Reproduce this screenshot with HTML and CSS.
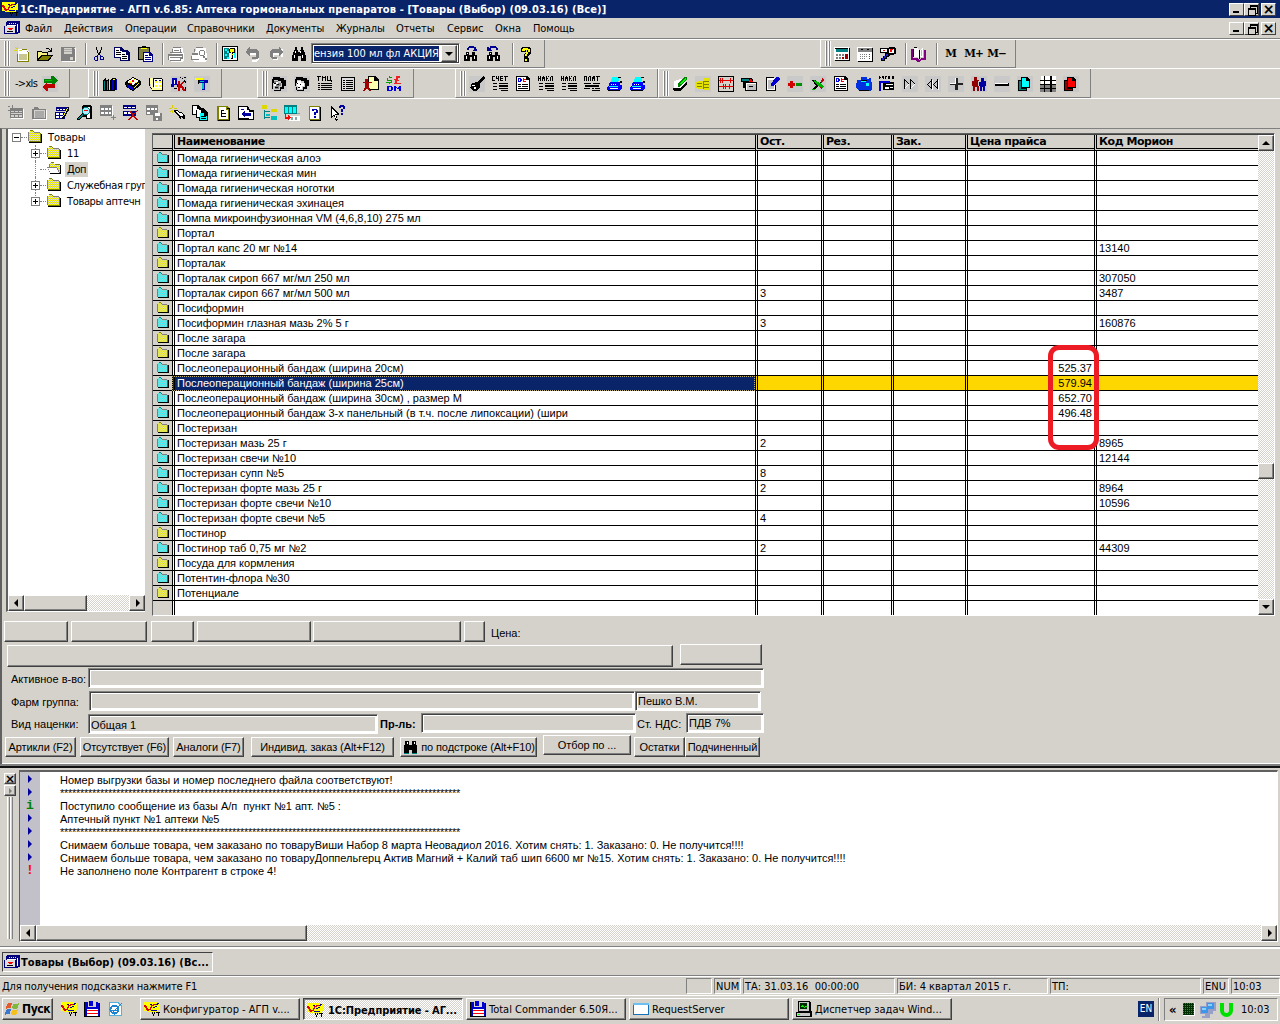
FILE: index.html
```html
<!DOCTYPE html>
<html lang="ru">
<head>
<meta charset="utf-8">
<title>1С:Предприятие</title>
<link rel="stylesheet" href="styles.css">
</head>
<body>
<svg class="defs" width="0" height="0">
<defs>
<pattern id="dy" width="2" height="2" patternUnits="userSpaceOnUse"><path fill="#ffff00" d="M0 0h2v2H0z"/><path fill="#c8c8b0" d="M0 0h1v1H0zM1 1h1v1H1z"/></pattern>
<pattern id="dc" width="2" height="2" patternUnits="userSpaceOnUse"><path fill="#00ffff" d="M0 0h2v2H0z"/><path fill="#c0c8c8" d="M0 0h1v1H0zM1 1h1v1H1z"/></pattern>
</defs>
<symbol id="fy" viewBox="0 0 16 16"><path fill="#fff" d="M1 4h12v8H1z"/><path fill="url(#dy)" d="M2 3l1-1h3l1 2h6v8H2z"/><path fill="#808000" d="M13 4h1v9H2v-1h11zM3 1h3v1H3zM6 2h1v1H6z"/><path fill="#000" d="M14 5h1v9H2v-1h12z"/><path fill="#808080" d="M1 3h1v9H1zM7 3h6v1H7z"/></symbol>
<symbol id="fc" viewBox="0 0 16 16"><path fill="#fff" d="M1 4h12v8H1z"/><path fill="url(#dc)" d="M2 3l1-1h3l1 2h6v8H2z"/><path fill="#008080" d="M13 4h1v9H2v-1h11zM3 1h3v1H3zM6 2h1v1H6z"/><path fill="#000" d="M14 5h1v9H2v-1h12z"/><path fill="#808080" d="M1 3h1v9H1zM7 3h6v1H7z"/></symbol>
<symbol id="fo" viewBox="0 0 16 16"><path fill="url(#dy)" d="M4 2h4l1 2h5v8H4z"/><path fill="#fff" d="M1 7h10l3 5H4z"/><path fill="#808080" d="M1 6h10v1H1zM2 8h1v1H2zM3 10h1v1H3zM11 7h1v2h1v2h1v1h-1v-1h-1V9h-1zM3 3h1v3H3z"/><path fill="#808000" d="M5 1h3v1H5zM9 3h5v1H9z"/><path fill="#000" d="M14 4h1v9H4v-1h10z"/></symbol>
<symbol id="onec" viewBox="0 0 16 16"><path fill="#ff0" d="M0 1h13v1h3v7h-2v2H3v-1H0z"/><path fill="#e00000" d="M0 4h2v1h1v2h1v1h2V6h1V4h2V3h4v1h-3v1H8v2H7v2H5v1H3V9H2V7H1V6H0z"/><path fill="#0000a0" d="M6 3h2v1H6zM7 9h6v1H7zM13 2h2v1h-2zM12 3h2v1h-2zM11 5h2v1h-2zM9 6h2v1H9z"/><path d="M8 11h1v2h1v-2h1v2h-1v2H9v-2H8zM12 11h4v1h-1v3h-1v-3h-2z"/></symbol>
<symbol id="cal" viewBox="0 0 16 16"><path fill="#000080" d="M3 1h13v12h-2v1H0V6h2V2h1z"/><path fill="#dedede" d="M1 6h10v7H1z"/><path fill="#ff0" d="M5 3h1v1H5zM7 3h1v1H7zM9 3h1v1H9zM11 3h1v1h-1z"/><path fill="#fff" d="M3 5h9v1H3zM13 4h1v8h-1z"/><path fill="red" d="M4 8h5v1H4zM5 9h3v1H5z"/><path d="M3 11h6v1H3z"/></symbol>
<symbol id="new" viewBox="0 0 16 16"><path fill="#fff" d="M4 3h9l2 3v9H4z"/><path fill="#c9c690" d="M5 8h8v6H5z"/><path fill="#808000" d="M3 6h1v9H3zM8 3h5v1H8zM13 5h1v1h1v10H3v-1h11V6h-1z"/><path fill="#dfd800" d="M3 1h1v3H3zM0 4h3v1H0zM5 4h3v1H5zM1 1l2 2v1zM7 1L5 3v1zM3 5h1v3H3zM1 8l2-3z"/></symbol>
<symbol id="open" viewBox="0 0 16 16"><path d="M0 5h4l1 1h6v3h5l-4 6H0zM9 2h3v1H9zM12 3h1v1h-1zM14 2h1v4h-4V5h2V4h1z"/><path fill="#f4f080" d="M1 6h3l1 1h5v2H4l-3 4z"/><path fill="#808000" d="M5 10h9l-3 4H2z"/></symbol>
<symbol id="save" viewBox="0 0 16 16"><path fill="#fff" d="M2 2h15v14H2z"/><path fill="#808080" d="M1 1h14v14H1z"/><path fill="#d5d2cc" d="M4 2h8v6H4zM10 11h3v3h-3zM14 2h1v1h-1z"/><path fill="#aaa" d="M4 3h8v1H4zM4 5h8v1H4z"/></symbol>
<symbol id="cut" viewBox="0 0 16 16"><path d="M5 1h1v3h1v3h1v2H7V7H6V4H5zM10 1h1v3h-1v3H9v2H8V6h1V4h1z"/><path fill="#000090" d="M6 9h1v1H6zM4 10h3v1H4zM3 11h1v3H3zM4 14h3v1H4zM6 11h1v3H6zM9 9h1v1h2v1h-2v3H9zM12 11h1v3h-3v-1h2z"/></symbol>
<symbol id="copy" viewBox="0 0 16 16"><path fill="#000060" d="M0 1h7l3 3h3l3 3v8H6v-3H0z"/><path fill="#fff" d="M1 2h5v3h2v6H1zM7 6h5v3h2v5H7z"/><path d="M2 4h3v1H2zM2 6h5v1H2zM2 8h5v1H2zM8 8h3v1H8zM8 10h5v1H8zM8 12h5v1H8z"/></symbol>
<symbol id="paste" viewBox="0 0 16 16"><path d="M1 1h4V0h4v1h4v13H1z"/><path fill="#808040" d="M2 2h10v11H2z"/><path fill="#ff0" d="M4 2h6v1H4z"/><path fill="#000080" d="M6 6h7l3 3v7H6z"/><path fill="#fff" d="M7 7h5v3h3v5H7z"/><path fill="#000080" d="M8 9h3v1H8zM8 11h6v1H8zM8 13h6v1H8z"/></symbol>
<symbol id="print" viewBox="0 0 16 16"><path fill="#fff" d="M5 2h10v5h2v7l-3 2H3l-2-2V8h3z"/><path fill="#808080" d="M5 1h8v1H5zM4 3h1v3H4zM12 3h1v4h-1zM2 6h12v1H2zM0 8h15v2H0zM0 10h1v4H0zM14 10h1v3h-2v2H2v-1h10v-2H2v-1h12zM6 4h5v1H6z"/></symbol>
<symbol id="preview" viewBox="0 0 16 16"><path fill="#fff" d="M5 2h10v5h2v7l-3 2H3l-2-2V8h3z"/><path fill="#808080" d="M5 1h7v1H5zM3 3h1v3H3zM1 7h6v2H1zM0 10h1v3h7v1H0zM9 4h4v1H9zM8 5h1v4H8zM13 5h1v4h-1zM9 9h4v1H9zM12 10h2v2h2v2h-2v-2h-2z"/></symbol>
<symbol id="keyhelp" viewBox="0 0 16 16"><path d="M0 0h16v15H0z"/><path fill="#fff" d="M1 1h14v13H1z"/><path fill="#008080" d="M2 2h5v11H2z"/><path fill="#0ff" d="M3 3h2v2H3zM5 5h2v2H5zM3 8h2v2H3zM5 11h2v2H5zM12 3h2v9h-2z"/><path d="M8 2h5v5h-2v6H9V7H7V3h1z"/><path fill="#ff0" d="M8 3h4v3H8zM9 6h1v6H9zM10 8h2v1h-2z"/></symbol>
<symbol id="undo" viewBox="0 0 16 16"><path fill="#fff" d="M3 3h1v3h7l3 2v6l-3 2H7v-2h4V9H4v1L1 7z"/><path fill="#808080" d="M4 1h1v2h6l3 2v6l-2 2H7v-2h4V7H5v3H4L1 6z"/></symbol>
<symbol id="redo" viewBox="0 0 16 16"><path fill="#fff" d="M13 3h2v8h-2V9H6v3h4v2H5l-2-2V8l3-2h7z"/><path fill="#808080" d="M11 1h1l3 5-3 4h-1V7H5v4h4v2H4l-2-2V5l3-2h6z"/></symbol>
<symbol id="bino" viewBox="0 0 16 16"><path d="M4 1h2v3h1v2h2V4h1V1h2v3h1v2h1v3h1v6h-5v-5H7v5H1V9h1V6h1V4h1z"/><path fill="#fff" d="M4 5h1v2H4zM3 9h1v3H3zM9 5h1v2H9zM11 9h1v3h-1z"/></symbol>
<symbol id="bdark" viewBox="0 0 16 16"><path d="M3 2h4v4h3V2h4v4h1v9h-5v-4H7v4H2V6h1z"/><path fill="#fff" d="M5 3h1v2H5zM12 3h1v2h-1z"/><path fill="#008080" d="M2 14h5v1H2zM10 14h5v1h-5z"/></symbol>
<symbol id="bnext" viewBox="0 0 16 16"><path d="M3 6h3v3h3V6h3v3h2v6H9v-4H7v4H1V9h2z"/><path fill="#fff" d="M3 10h1v3H3zM11 10h1v3h-1zM4 7h1v1H4z"/><path fill="#000090" d="M4 2h1V1h1V0h5v1h2v2h1v2h-4V4h1V2H6v2H4z"/></symbol>
<symbol id="bprev" viewBox="0 0 16 16"><path d="M3 6h3v3h3V6h3v3h2v6H9v-4H7v4H1V9h2z"/><path fill="#fff" d="M3 10h1v3H3zM11 10h1v3h-1zM4 7h1v1H4z"/><path fill="#000090" d="M12 4h-2V2H5v2h1v1H1V1h2v1h1V0h6v1h1v1h1z"/></symbol>
<symbol id="q" viewBox="0 0 16 16"><path d="M4 1h7l2 2v4l-3 3v2H6V8l3-3V4H8v2H3V2zM6 12h5v4H6z"/><path fill="#ff0" d="M5 2h5v1h2v3h-2v2H9v2H7V8h1V6h2V4H7v1H4V3h1zM7 13h2v2H7z"/></symbol>
<symbol id="calc" viewBox="0 0 16 16"><path fill="#fff" d="M0 1h15v13H0z"/><path d="M15 2h1v13H1v-1h14zM1 2h13v1H1z"/><path fill="#008080" d="M2 3h12v3H2z"/><path fill="#808080" d="M2 8h2v2H2zM5 8h2v2H5zM8 8h2v2H8zM2 11h2v2H2zM5 11h2v2H5z"/><path fill="#a00000" d="M8 11h2v2H8zM11 8h3v5h-3z"/></symbol>
<symbol id="calend" viewBox="0 0 16 16"><path fill="#fff" d="M0 1h15v14H0z"/><path d="M15 2h1v14H1v-1h14z"/><path fill="#808080" d="M1 2h14v4H1zM3 8h1v1H3zM5 8h1v1H5zM7 8h1v1H7zM9 8h1v1H9zM3 10h1v1H3zM5 10h1v1H5zM7 10h1v1H7zM9 10h1v1H9zM3 12h1v1H3zM5 12h1v1H5zM7 12h1v1H7z"/><path fill="red" d="M12 8h1v1h-1zM12 10h1v1h-1zM12 12h1v1h-1z"/><path d="M4 3h2v1H4zM10 3h2v1h-2z"/></symbol>
<symbol id="find" viewBox="0 0 16 16"><path d="M0 2h9V1h6l1 2v5h-2v1h-4v1H9v1H7v2H5v2H1v-3h2v-2h2V7H0z"/><path fill="#fff" d="M1 3h6v3H1zM9 3h5v4H9z"/><path fill="red" d="M10 3h3v1h-1v2h-2zM3 4h2v1H3z"/><path fill="#2020d0" d="M6 8h2v2H6v2H4v2H2v-2h2v-2h2z"/></symbol>
<symbol id="book" viewBox="0 0 16 16"><path fill="#800080" d="M0 3h2v9h5l1 2 2-2h3V4h2v10h-5l-1 2H6l-1-2H0z"/><path fill="#fff" d="M3 2h3l2 2v9l-2-2H3zM9 4l3-3v10H9z"/><path d="M8 4h1v9H8zM3 1h3v1H3zM2 3h1v8H2z"/><path fill="#cc0" d="M10 4h1v6h-1zM12 3h1v9h-1z"/></symbol>
<symbol id="arr" viewBox="0 0 16 16"><path fill="#c9c9c9" d="M0 0h16v16H0z"/><path fill="#008000" d="M2 3h7V0h2l5 4-4 4h-2V7H2z"/><path fill="#00c000" d="M3 4h7v1H3z"/><path fill="#c00000" d="M0 11l5-5v2h8v4H6v3H5z"/></symbol>
<symbol id="books" viewBox="0 0 16 16"><path d="M1 4l3-2v2l3-1v2l3-3h4v12l-2 1H1z"/><path fill="#008080" d="M2 5h1v9H2z"/><path fill="#ff0" d="M7 5h1v9H7zM11 3h2v1h-2z"/><path fill="#808000" d="M5 5h1v9H5z"/><path fill="#0000c0" d="M10 4h2v10h-2zM14 3h1v11h-1z"/></symbol>
<symbol id="cube" viewBox="0 0 16 16"><path d="M0 6l8-5 8 4v4l-8 6-7-4z"/><path fill="#fff" d="M2 6l6-4 6 3-6 4z"/><path fill="#ff0" d="M4 5h2v2H4zM8 3h2v1H8zM10 6h2v1h-2z"/><path fill="red" d="M7 4h2v2H7zM5 7h2v1H5z"/><path fill="#0000c0" d="M2 8l6 3v3l-6-3z"/><path fill="#ff0" d="M9 11l5-4v1l-5 4z"/></symbol>
<symbol id="ledger" viewBox="0 0 16 16"><path fill="#ffffa0" d="M1 2h4v10h9v2H4z"/><path d="M0 1h1v9l3 3v2h11V3h-1v11H4l-2-3V2zM5 2h9v1H5zM5 3h1v8H5z"/><path fill="#fff" d="M6 3h8v9H6z"/><path fill="#ff0" d="M7 5h2v2H7zM11 5h2v2h-2zM7 9h2v2H7zM11 9h2v2h-2z"/><path fill="#0000c0" d="M7 4h2v1H7zM11 4h2v1h-2z"/></symbol>
<symbol id="dk" viewBox="0 0 16 16"><path fill="#c9c9c9" d="M0 0h16v16H0z"/><path fill="#0000b0" d="M1 2h5v6h2v3H6V9H3v2H0V8h1z"/><path fill="#fff" d="M3 4h1v4H3z"/><path fill="#c00000" d="M7 5h2v3l3-3h2l-3 4 4 6h-3l-2-4-1 1v3H7z"/><path d="M9 1h1v1H9zM11 2h1v1h-1zM13 1h2v1h-2zM3 12h3v1H3zM13 4h1v1h1v2h-1zM14 11h1v4h-1z"/></symbol>
<symbol id="tt" viewBox="0 0 16 16"><path fill="#c9c9c9" d="M0 0h16v16H0z"/><path fill="#ff0" d="M1 2h8v2H6v3H4V4H1z"/><path d="M4 4h1v4H4z"/><path fill="#0000b0" d="M5 4h9v3h-3v7H8V7H5z"/><path fill="#00c0c0" d="M8 7h2v6H8zM6 5h4v1H6z"/></symbol>
<symbol id="face" viewBox="0 0 16 16"><path fill="#c9c9c9" d="M0 0h16v16H0z"/><path d="M2 1h7v1h4v2h2v6h-2v3h-3v2H3v-1h6v-3h2V7h-1V5H7V4H3v3H1V3h1zM1 7h1v6H1z"/><path fill="#808080" d="M3 5h4v2h3v3H8v3H4v-3H3z"/><path fill="#fff" d="M3 8h2v2H3zM5 6h2v2H5z"/><path d="M3 7h2v1H3zM6 8h2v1H6zM4 11h3v1H4z"/></symbol>
<symbol id="face2" viewBox="0 0 16 16"><path fill="#c9c9c9" d="M0 0h16v16H0z"/><path d="M2 1h7v1h4v2h2v6h-2v3h-3v2H3v-1h6v-3h2V7h-1V5H7V4H3v3H1V3h1zM1 7h1v3H1zM2 11h1v3H2z"/><path fill="#fff" d="M3 5h4v2h3v3H8v3H4v-3H3z"/><path d="M3 7h1v1H3zM6 8h1v1H6zM4 11h2v1H4z"/></symbol>
<symbol id="tmc" viewBox="0 0 16 16"><path d="M0 0h4v1H2v4H1V1H0zM5 0h1v1h2V0h1v5H8V2H6v3H5zM10 0h1v4h2V0h1v4h1v2h-1V5h-4zM1 7h2v1H1zM4 7h11v1H4zM1 9h2v1H1zM4 9h11v1H4zM1 11h2v1H1zM4 11h11v1H4zM1 13h2v1H1zM4 13h11v1H4z"/></symbol>
<symbol id="list" viewBox="0 0 16 16"><path d="M1 1h14v14H1z"/><path fill="#dedede" d="M2 2h12v12H2z"/><path d="M3 4h2v1H3zM6 4h7v1H6zM3 6h2v1H3zM6 6h7v1H6zM3 8h2v1H3zM6 8h7v1H6zM3 10h2v1H3zM6 10h7v1H6zM3 12h2v1H3zM6 12h7v1H6z"/></symbol>
<symbol id="mandoc" viewBox="0 0 16 16"><path d="M5 0h7l4 4v10H5z"/><path fill="#ffffb0" d="M6 1h5v4h4v8H6z"/><path fill="#a00000" d="M2 3h3v3h4v1H6v4l2 4H6l-2-3-2 3H0l2-4V7H0V6h2z"/></symbol>
<symbol id="dm" viewBox="0 0 16 16"><path fill="#00a000" d="M3 0h1v1h2v1H2v2h4v3H4v1H3V7H0V6h5V5H1V2h2z"/><path fill="#f02020" d="M10 0h4v2h-2v2h1v1h-2v2h4v1H8V7h1V4H8V3h2z"/><path fill="#0000e0" d="M1 10h5v1h1v3H6v1H1zm2 1v3h2v-3zM8 10h2l1 2 2-2h2v5h-2v-3l-1 1h-1l-1-1v3H8z"/></symbol>
<symbol id="ladle" viewBox="0 0 16 16"><path fill="#c9c9c9" d="M0 0h16v16H0z"/><path d="M15 0l1 2-5 5v4l-3 4H4l-3-3 2-5 5-1z"/><path fill="#fff" d="M3 9h3v1H3zM5 11h2v2H5z"/></symbol>
<symbol id="schet" viewBox="0 0 16 16"><path d="M0 0h3v1H1v3h2v1H0zM4 0h1v2h1V0h1v5H6V3H4zM8 0h3v1H9v1h2v1H9v1h2v1H8zM12 0h4v1h-2v4h-1V1h-1zM1 7h4v1H1zM7 7h9v1H7zM1 10h4v1H1zM7 9h9v2H7zM1 13h4v1H1zM7 12h9v1H7zM9 14h7v1H9z"/></symbol>
<symbol id="dkdoc" viewBox="0 0 16 16"><path d="M1 0h11l3 3v12H1z"/><path fill="#fff" d="M2 1h9v3h3v10H2z"/><path fill="#0000e0" d="M3 2h3v1h1v2H6v1H3zm1 1v2h1V3z"/><path fill="red" d="M8 2h1v1h2v1H9v1h2v1H8z"/><path d="M3 8h3v1H3zM7 8h6v1H7zM3 10h3v1H3zM7 10h6v1H7zM3 12h10v1H3z"/></symbol>
<symbol id="nakl" viewBox="0 0 16 16"><path d="M0 0h1v2h1V0h1v5H2V3H1v2H0zM4 1h1V0h1v1h1v4H6V3H5v2H4zM8 0h1v2h1V0h1v1h-1v3h1v1h-1V3H9v2H8zM13 0h2v5h-1V1h-1v4h-1V1h1zM1 7h4v1H1zM7 7h9v1H7zM1 10h4v1H1zM7 9h9v2H7zM1 13h4v1H1zM7 12h9v1H7zM9 14h7v1H9z"/></symbol>
<symbol id="plat" viewBox="0 0 16 16"><path d="M0 0h3v5H2V1H1v4H0zM5 0h2v5H6V1H5v4H4V1h1zM9 0h2v5h-1V3H9v2H8V1h1zM12 0h4v1h-2v4h-1V1h-1zM0 7h7v1H0zM9 7h7v1H9zM1 9h14v2H1zM0 12h6v1H0zM8 12h2v1H8zM11 12h5v1h-5zM8 14h8v1H8z"/></symbol>
<symbol id="typew" viewBox="0 0 16 16"><path fill="#00f" d="M3 6h10v3h2v3l-2 2H0v-3l2-2z"/><path fill="#0ff" d="M5 1h8l-2 5H4zM2 10h9v1H2z"/><path fill="#fff" d="M4 8h1v1H4zM6 8h1v1H6zM8 8h1v1H8zM3 12h8v1H3z"/><path d="M13 5h2v2h-2zM1 14h12v1H1zM11 1h3v1h-3z"/></symbol>
<symbol id="pad" viewBox="0 0 16 16"><path fill="#fff" d="M2 5l7-2 5 4-6 7-6-2z"/><path d="M1 12h7l7-6v2l-6 7H2z"/><path fill="#008000" d="M6 8l6-7h3v2l-6 7-3 1z"/><path fill="#0f0" d="M8 8l5-6 1 1-5 6z"/></symbol>
<symbol id="coins" viewBox="0 0 16 16"><path fill="#c9c9c9" d="M0 0h16v16H0z"/><path fill="#e5e200" d="M9 2h5l1 1v9l-1 2H9l-1-1H2l-1-1V6l1-1h6V3z"/><path fill="#808000" d="M9 5h5v1H9zM9 8h5v1H9zM9 11h5v1H9zM2 7h5v1H2zM2 10h5v1H2zM8 5h1v8H8z"/></symbol>
<symbol id="abacus" viewBox="0 0 16 16"><path d="M0 0h16v16H0z"/><path fill="#d5d2cc" d="M1 1h14v14H1z"/><path fill="#e00000" d="M1 4h14v1H1zM1 10h14v1H1zM2 2h1v5H2zM4 2h1v5H4zM12 2h1v5h-1zM5 8h1v5H5zM7 8h1v5H7zM11 8h1v5h-1z"/></symbol>
<symbol id="card" viewBox="0 0 16 16"><path d="M0 2h10l2 2v2h4v9H4v-3H2V6H0z"/><path fill="#008080" d="M1 3h7v2H1z"/><path fill="red" d="M9 3l3 3H8z"/><path fill="#fff" d="M5 7h10v7H5z"/><path fill="#c0c0c0" d="M6 8h9v6H6z"/><path d="M8 10h4v1H8z"/></symbol>
<symbol id="pen" viewBox="0 0 16 16"><path fill="#fff" d="M2 2h9v12H2z"/><path d="M2 1h8v1H3v12h8V9h1v6H2z"/><path fill="#c0c0c0" d="M4 4h6v9H4z"/><path fill="#0000d0" d="M12 1h2l2 2-7 7H7V8z"/></symbol>
<symbol id="pm" viewBox="0 0 16 16"><path fill="#c9c9c9" d="M0 0h16v16H0z"/><path fill="#d00000" d="M3 5h3v2h2v3H6v2H3v-2H1V7h2z"/><path fill="#009000" d="M9 7h6v3H9z"/></symbol>
<symbol id="xg" viewBox="0 0 16 16"><path fill="#c9c9c9" d="M0 0h16v16H0z"/><path d="M2 4h3l4 4 3-4h3L4 14H1l5-4z"/><path fill="#00b000" d="M3 5l8 7 3-1-2-3-8-4zM2 13h3v1H2z"/><path fill="#d00000" d="M12 2l3 2-4 3zM9 11l3 3v-3z"/></symbol>
<symbol id="bag" viewBox="0 0 16 16"><path fill="#0030e0" d="M1 4h4V1h6v2l4-1v3l1 2v6l-2 2H3l-3-4V8l1-2z"/><path fill="#0ff" d="M10 7h3v3h-3zM5 5h5v1H5z"/><path d="M5 4h6v1H5zM3 14h10v1H3z"/></symbol>
<symbol id="kassa" viewBox="0 0 16 16"><path d="M0 0h1v1h1v1H1v1H0zM3 0h2v3H4V2H3zM6 0h2v1H7v2H6zM9 0h2v3H9zM13 0h2v3h-2zM4 6h11v8H4z"/><path fill="#0000d0" d="M0 5h11v2H2v8H0z"/><path fill="#fff" d="M7 8h7v1H7zM6 11h4v2H6zM11 11h3v1h-3z"/></symbol>
<symbol id="ff" viewBox="0 0 16 16"><path fill="#c9c9c9" d="M0 0h16v16H0z"/><path d="M2 3h1v10H2zM3 4h1v1H3zM4 5h1v1H4zM5 6h1v1H5zM6 7h1v1H6zM8 3h1v10H8zM9 4h1v1H9zM10 5h1v1h-1zM11 6h1v1h-1zM12 7h1v1h-1z"/><path fill="#fff" d="M6 8h1v1H6zM5 9h1v1H5zM4 10h1v1H4zM3 11h1v1H3zM12 8h1v1h-1zM11 9h1v1h-1zM10 10h1v1h-1zM9 11h1v1H9z"/></symbol>
<symbol id="rw" viewBox="0 0 16 16"><path fill="#c9c9c9" d="M0 0h16v16H0z"/><path d="M6 3h1v10H6zM5 5h1v1H5zM4 6h1v1H4zM3 7h1v1H3zM2 8h1v1H2zM3 9h1v1H3zM4 10h1v1H4zM5 11h1v1H5zM12 3h1v10h-1zM11 5h1v1h-1zM10 6h1v1h-1zM9 7h1v1H9zM8 8h1v1H8zM9 9h1v1H9zM10 10h1v1h-1zM11 11h1v1h-1z"/><path fill="#fff" d="M7 4h1v10H7zM13 4h1v10h-1z"/></symbol>
<symbol id="plus" viewBox="0 0 16 16"><path fill="#c9c9c9" d="M0 0h16v16H0z"/><path fill="#222" d="M7 2h3v5h5v2h-5v5H7V9H2V7h5z"/><path fill="#fff" d="M7 2h1v5H7zM2 7h6v1H2z"/></symbol>
<symbol id="men" viewBox="0 0 16 16"><path fill="#c9c9c9" d="M0 0h16v16H0z"/><path fill="#900000" d="M3 1h3v3h2v1H7v5h1v5H6v-4H4v4H2v-5H1V5h2z"/><path fill="#0000a0" d="M10 2h3v3h2v5h-1v5h-2v-4h-1v4H9v-5H8V6h2z"/></symbol>
<symbol id="minus" viewBox="0 0 16 16"><path fill="#c9c9c9" d="M0 0h16v16H0z"/><path d="M1 7h14v3H1z"/><path fill="#fff" d="M1 7h13v1H1z"/></symbol>
<symbol id="pgc" viewBox="0 0 16 16"><path fill="#c9c9c9" d="M0 0h16v16H0z"/><path d="M4 1h6l3 3v8h-3v3H1V4h3z"/><path fill="#008080" d="M2 5h2v8h5v1H2z"/><path fill="#0ff" d="M5 2h4v3h3v6H5z"/></symbol>
<symbol id="gridic" viewBox="0 0 16 16"><path fill="#fff" d="M1 0h15v8H1z"/><path fill="#808080" d="M0 9h16v7H0z"/><path d="M4 0h1v16H4zM10 0h2v16h-2zM0 4h16v1H0zM0 8h16v1H0zM0 12h16v1H0z"/></symbol>
<symbol id="pgr" viewBox="0 0 16 16"><path fill="#c9c9c9" d="M0 0h16v16H0z"/><path d="M4 1h6l3 3v8h-3v3H1V4h3z"/><path fill="#900" d="M2 5h2v8h5v1H2z"/><path fill="red" d="M5 2h4v3h3v6H5z"/></symbol>
<symbol id="tbg" viewBox="0 0 16 16"><path fill="#fff" d="M3 4h13v10H3z"/><path fill="#808080" d="M2 3h13v10H2z"/><path fill="#d5d2cc" d="M3 6h3v1H3zM7 6h3v1H7zM11 6h3v1h-3zM3 8h11v1H3zM3 10h3v2H3zM7 10h3v2H7zM11 10h3v2h-3z"/><path fill="#808080" d="M0 1h2v1H0zM4 0h1v3H4zM0 5h2v1H0z"/></symbol>
<symbol id="fg" viewBox="0 0 16 16"><path fill="#fff" d="M2 5h14v10H2z"/><path fill="#808080" d="M3 2h4l1 2h7v10H1V4h2z"/><path fill="#d5d2cc" d="M3 5h11v8H3z"/><path fill="#aaa" d="M4 6h9v7H4z"/></symbol>
<symbol id="tbe" viewBox="0 0 16 16"><path fill="#000080" d="M2 2h12v4H2zM1 7h10v7H1z"/><path fill="#fff" d="M3 4h2v1H3zM6 4h2v1H6zM9 4h2v1H9zM2 8h3v2H2zM6 8h3v2H6zM2 11h3v2H2zM6 11h3v2H6z"/><path d="M14 2h1v3l-5 8-2 1 1-3z"/><path fill="#ff0" d="M13 3h1l-4 8H9z"/></symbol>
<symbol id="mag" viewBox="0 0 16 16"><path d="M6 0h8v1h1v13H9v-2H5l-3 3H0v-2l5-5V2z"/><path fill="#fff" d="M7 2h6v11h-3V9H6V3z"/><circle cx="9" cy="6" r="4" fill="#008080"/><circle cx="9" cy="6" r="3" fill="#aef"/><path fill="red" d="M7 5h4v1H7z"/><path fill="#008080" d="M5 9l1 1-4 4H1v-1z"/></symbol>
<symbol id="tbp" viewBox="0 0 16 16"><path fill="#808080" d="M0 0h12v11H0z"/><path fill="#fff" d="M1 3h3v2H1zM5 3h3v2H5zM9 3h2v2H9zM1 7h3v2H1zM5 7h3v2H5zM9 7h2v2H9zM12 1h1v10h-1z"/><path fill="#808080" d="M13 10h1v2h2v1h-2v2h-1v-2h-2v-1h2z"/></symbol>
<symbol id="tbx" viewBox="0 0 16 16"><path fill="#000080" d="M0 0h13v4H0zM0 6h13v5H0z"/><path fill="#fff" d="M1 2h3v1H1zM5 2h3v1H5zM9 2h3v1H9zM1 7h3v2H1zM5 7h3v2H5z"/><path fill="#c00000" d="M5 6h2l3 3 4-4h1l-4 5 4 5h-2l-3-4-4 4H5l4-5z"/></symbol>
<symbol id="tbs" viewBox="0 0 16 16"><path fill="#808080" d="M0 0h12v10H0zM7 8h9v8H7z"/><path fill="#fff" d="M1 3h3v2H1zM5 3h3v2H5zM9 3h2v2H9zM1 7h3v2H1zM9 8h5v3H9zM10 13h2v2h-2z"/></symbol>
<symbol id="wand" viewBox="0 0 16 16"><path fill="#dc0" d="M3 0h1v3H3zM0 3h3v1H0zM5 3h3v1H5zM3 5h1v3H3zM1 1l2 2zM0 7l3-3v1L1 7zM7 0L5 2v1z"/><path d="M5 5h3l2 2h2l4 4v3h-2l-1-3-1 3h-1l-2-4-2-1-2-2z"/><path fill="#fff" d="M6 6h2l2 2h2l2 2v1h-2l-3-2z"/></symbol>
<symbol id="cpc" viewBox="0 0 16 16"><path d="M0 0h6l3 3h2l5 4v9H7v-3H4v-3H0z"/><path fill="#fff" d="M1 1h4v3h2v1H4v4H1zM5 5h4v3H8v4H5z"/><path fill="#0ff" d="M8 8h4v3h3v4H8z"/><path d="M9 11h5v1H9zM9 13h5v1H9z"/></symbol>
<symbol id="doce" viewBox="0 0 16 16"><path fill="#808000" d="M2 1h10l2 2v13H2z"/><path fill="#fff" d="M4 2h7v3h2v9H4z"/><path d="M12 3h3v13H3v-1h11V4h-2zM6 5h3v1H6zM6 8h5v1H6zM6 11h5v1H6zM6 5h1v7H6z"/></symbol>
<symbol id="docarr" viewBox="0 0 16 16"><path d="M0 1h10l2 4h4v10H0z"/><path fill="#fff" d="M1 2h8v3h2v8H1zM11 7h4v7h-4z"/><path fill="#0000a0" d="M3 4h3v1H3zM3 9l4-3v2h6v3H7v2z"/></symbol>
<symbol id="treei" viewBox="0 0 16 16"><path fill="#dcd800" d="M1 0h5v4H1zM10 4h6v3h-6z"/><path fill="#008080" d="M3 5h1v9H3zM4 6h5v1H4zM4 12h5v1H4z"/><path fill="#00c0c0" d="M5 9h4v2H5zM10 11h6v4h-6z"/></symbol>
<symbol id="tbc" viewBox="0 0 16 16"><path fill="#008080" d="M0 0h13v9H0z"/><path fill="#0ff" d="M1 2h3v6H1zM5 2h3v6H5zM9 2h3v6H9z"/><path fill="#fff" d="M5 11h11v5H5z"/><path fill="#8aa" d="M7 12h2v3H7zM11 12h2v3h-2zM13 8h3v1h-3z"/><path fill="red" d="M1 9h1v3h2v-2l3 2-3 3v-1H1z"/></symbol>
<symbol id="qd" viewBox="0 0 16 16"><path fill="#808000" d="M2 1h11v14H2z"/><path d="M13 2h1v14H3v-1h10z"/><path fill="#fff" d="M3 2h9v12H3z"/><path fill="#0000b0" d="M5 4h5v1h1v3H9v2H7V7h2V5H7v1H5zM7 11h2v2H7z"/></symbol>
<symbol id="aq" viewBox="0 0 16 16"><path d="M1 1l8 8v1H6l2 5-2 1-2-5-3 2z"/><path fill="#fff" d="M2 4l5 5H5l2 5H6L4 9l-2 2z"/><path fill="#0000a0" d="M10 0h4v1h1v3h-2v3h-2V4h2V2h-2v1H9V1h1zM11 8h2v2h-2z"/></symbol>
<symbol id="flop" viewBox="0 0 16 16"><path fill="#0000d0" d="M0 1h14v1h2v14H0z"/><path fill="#d5d2cc" d="M4 0h8v6H4z"/><path fill="#0000d0" d="M5 0h4v5H5z"/><path fill="#fff" d="M3 8h11v7H3z"/><path fill="red" d="M3 9h11v1H3zM3 12h11v1H3z"/><path d="M0 1h1v15H0zM0 15h16v1H0zM15 2h1v14h-1z"/></symbol>
<symbol id="ie" viewBox="0 0 16 16"><path fill="#fff" stroke="#5aaedc" d="M2 1.5h9l3 3v10H2z"/><circle cx="7.500" cy="8.500" r="4" fill="none" stroke="#1b86cf" stroke-width="2"/><path fill="none" stroke="#1b86cf" d="M4 9h8M5 12L15 2"/></symbol>
<symbol id="win" viewBox="0 0 16 16"><path fill="#e35b2c" d="M2 3q3-2 5-1L6 7Q4 6 1 8z"/><path fill="#7fb83c" d="M8 3q3 1 6-1l-1 5q-3 2-6 0z"/><path fill="#3a78d0" d="M1 9q3-2 5-1l-1 5q-2-1-5 1z"/><path fill="#f4c020" d="M7 9q3 1 6-1l-1 5q-3 2-6 0z"/></symbol>
<symbol id="app" viewBox="0 0 16 16"><path fill="#1670b8" d="M0 2h16v12H0z"/><path fill="#6cc0f0" d="M0 2h16v2H0z"/><path fill="#fff" d="M1 4h14v9H1z"/></symbol>
<symbol id="pc" viewBox="0 0 16 16"><path d="M2 0h11l2 2v8h1v6H0v-5h2z"/><path fill="#c8c8c8" d="M3 1h10v9H3zM1 12h13v3H1z"/><path fill="#002b00" d="M4 2h7v6H4z"/><path fill="#0f0" d="M5 5h1V4h1v1h1v1h1V5h2v1H9v1H8V6H5zM2 13h2v1H2z"/></symbol>
<symbol id="net" viewBox="0 0 16 16"><path fill="#9a9fc8" d="M6 0h10v9h-3v3h-3v4H2v-2h3v-2H0V4h6z"/><path fill="#3d97e8" d="M7 1h7v6H7zM1 5h7v6H1z"/><path fill="#8dd0ff" d="M8 2h4v2H8zM2 6h4v2H2z"/></symbol>
</svg>

<header class="titlebar"><svg class="ic"><use href="#onec"/></svg><span class="title">1С:Предприятие - АГП v.6.85: Аптека гормональных препаратов - [Товары (Выбор) (09.03.16) (Все)]</span><div class="winbtns"><i class="wb mn"></i><i class="wb rs"></i><i class="wb cl">×</i></div></header>
<nav class="menubar"><svg class="ic"><use href="#cal"/></svg><div class="menu"><span>Файл</span><span>Действия</span><span>Операции</span><span>Справочники</span><span>Документы</span><span>Журналы</span><span>Отчеты</span><span>Сервис</span><span>Окна</span><span>Помощь</span></div><div class="winbtns"><i class="wb mn"></i><i class="wb rs"></i><i class="wb cl">×</i></div></nav>

<div class="bar bar1">
<div class="band first b1"><i class="grip"></i><svg><use href="#new"/></svg><svg><use href="#open"/></svg><svg><use href="#save"/></svg><i class="sep"></i><svg><use href="#cut"/></svg><svg><use href="#copy"/></svg><svg><use href="#paste"/></svg><i class="sep"></i><svg><use href="#print"/></svg><svg><use href="#preview"/></svg><i class="sep"></i><svg><use href="#keyhelp"/></svg><svg><use href="#undo"/></svg><svg><use href="#redo"/></svg><svg><use href="#bino"/></svg><div class="combo"><span>ензия 100 мл фл АКЦИЯ</span><i class="btn dn"></i></div><svg><use href="#bnext"/></svg><svg class="wide"><use href="#bprev"/></svg><i class="sep"></i><svg><use href="#q"/></svg></div>
<div class="band b2"><i class="grip"></i><svg><use href="#calc"/></svg><svg><use href="#calend"/></svg><svg><use href="#find"/></svg><i class="sep"></i><svg><use href="#book"/></svg><i class="sep"></i><b>M</b><b>M+</b><b>M−</b></div>
</div>
<div class="bar bar2">
<div class="band first c1"><i class="grip"></i><span class="xls">-&gt;xls</span><svg><use href="#arr"/></svg></div>
<div class="band c2"><i class="grip"></i><svg><use href="#books"/></svg><svg><use href="#cube"/></svg><svg><use href="#ledger"/></svg><svg><use href="#dk"/></svg><svg><use href="#tt"/></svg></div>
<div class="band c3"><i class="grip"></i><svg><use href="#face"/></svg><svg><use href="#face2"/></svg><svg><use href="#tmc"/></svg><svg><use href="#list"/></svg><svg><use href="#mandoc"/></svg><svg><use href="#dm"/></svg></div>
<div class="band c4"><i class="grip"></i><svg><use href="#ladle"/></svg><svg><use href="#schet"/></svg><svg><use href="#dkdoc"/></svg><svg><use href="#nakl"/></svg><svg><use href="#nakl"/></svg><svg><use href="#plat"/></svg><svg><use href="#typew"/></svg><svg><use href="#typew"/></svg></div>
<div class="band c5"><i class="grip"></i><svg><use href="#pad"/></svg><svg><use href="#coins"/></svg><svg><use href="#abacus"/></svg><svg><use href="#card"/></svg><svg><use href="#pen"/></svg><svg><use href="#pm"/></svg><svg><use href="#xg"/></svg><svg><use href="#dkdoc"/></svg><svg><use href="#bag"/></svg><svg><use href="#kassa"/></svg><svg><use href="#ff"/></svg><svg><use href="#rw"/></svg><svg><use href="#plus"/></svg><svg><use href="#men"/></svg><svg><use href="#minus"/></svg><svg><use href="#pgc"/></svg><svg><use href="#gridic"/></svg><svg><use href="#pgr"/></svg></div>
</div>
<div class="bar bar3"><svg><use href="#tbg"/></svg><svg><use href="#fg"/></svg><svg><use href="#tbe"/></svg><svg><use href="#mag"/></svg><svg><use href="#tbp"/></svg><svg><use href="#tbx"/></svg><svg><use href="#tbs"/></svg><svg><use href="#wand"/></svg><svg><use href="#cpc"/></svg><svg><use href="#doce"/></svg><svg><use href="#docarr"/></svg><svg><use href="#treei"/></svg><svg><use href="#tbc"/></svg><svg><use href="#qd"/></svg><svg><use href="#aq"/></svg></div>

<main class="work">
<div class="panes">
<aside class="tree">
<ul>
<li class="root"><i class="exp m"></i><i class="dots"></i><svg><use href="#fy"/></svg><span>Товары</span></li>
<li><i class="exp"></i><i class="dots"></i><svg><use href="#fy"/></svg><span>11</span></li>
<li><i class="exp none"></i><i class="dots"></i><svg><use href="#fo"/></svg><span class="cur">Доп</span></li>
<li><i class="exp"></i><i class="dots"></i><svg><use href="#fy"/></svg><span>Служебная груг</span></li>
<li><i class="exp"></i><i class="dots"></i><svg><use href="#fy"/></svg><span>Товары аптечн</span></li>
</ul>
<div class="hs"><i class="btn lf"></i><i class="btn th"></i><i class="btn rt"></i></div>
</aside>
<section class="gridbox">
<div class="gridview">
<table>
<colgroup><col class="k0"><col class="k1"><col class="k2"><col class="k3"><col class="k4"><col class="k5"><col class="k6"></colgroup>
<thead><tr><th></th><th>Наименование</th><th>Ост.</th><th>Рез.</th><th>Зак.</th><th>Цена прайса</th><th>Код Морион</th></tr></thead>
<tbody>
<tr><td><svg><use href="#fc"/></svg></td><td>Помада гигиеническая алоэ</td><td></td><td></td><td></td><td></td><td></td></tr>
<tr><td><svg><use href="#fc"/></svg></td><td>Помада гигиеническая мин</td><td></td><td></td><td></td><td></td><td></td></tr>
<tr><td><svg><use href="#fc"/></svg></td><td>Помада гигиеническая ноготки</td><td></td><td></td><td></td><td></td><td></td></tr>
<tr><td><svg><use href="#fc"/></svg></td><td>Помада гигиеническая эхинацея</td><td></td><td></td><td></td><td></td><td></td></tr>
<tr><td><svg><use href="#fc"/></svg></td><td>Помпа микроинфузионная VM (4,6,8,10) 275 мл</td><td></td><td></td><td></td><td></td><td></td></tr>
<tr><td><svg><use href="#fy"/></svg></td><td>Портал</td><td></td><td></td><td></td><td></td><td></td></tr>
<tr><td><svg><use href="#fc"/></svg></td><td>Портал капс 20 мг №14</td><td></td><td></td><td></td><td></td><td>13140</td></tr>
<tr><td><svg><use href="#fy"/></svg></td><td>Порталак</td><td></td><td></td><td></td><td></td><td></td></tr>
<tr><td><svg><use href="#fc"/></svg></td><td>Порталак сироп 667 мг/мл 250 мл</td><td></td><td></td><td></td><td></td><td>307050</td></tr>
<tr><td><svg><use href="#fc"/></svg></td><td>Порталак сироп 667 мг/мл 500 мл</td><td>3</td><td></td><td></td><td></td><td>3487</td></tr>
<tr><td><svg><use href="#fy"/></svg></td><td>Посиформин</td><td></td><td></td><td></td><td></td><td></td></tr>
<tr><td><svg><use href="#fc"/></svg></td><td>Посиформин глазная мазь 2% 5 г</td><td>3</td><td></td><td></td><td></td><td>160876</td></tr>
<tr><td><svg><use href="#fy"/></svg></td><td>После загара</td><td></td><td></td><td></td><td></td><td></td></tr>
<tr><td><svg><use href="#fy"/></svg></td><td>После загара</td><td></td><td></td><td></td><td></td><td></td></tr>
<tr><td><svg><use href="#fc"/></svg></td><td>Послеоперационный бандаж (ширина 20см)</td><td></td><td></td><td></td><td>525.37</td><td></td></tr>
<tr class="sel"><td><svg><use href="#fc"/></svg></td><td>Послеоперационный бандаж (ширина 25см)</td><td></td><td></td><td></td><td>579.94</td><td></td></tr>
<tr><td><svg><use href="#fc"/></svg></td><td>Послеоперационный бандаж (ширина 30см) , размер М</td><td></td><td></td><td></td><td>652.70</td><td></td></tr>
<tr><td><svg><use href="#fc"/></svg></td><td>Послеоперационный бандаж 3-х панельный (в т.ч. после липоксации) (шири</td><td></td><td></td><td></td><td>496.48</td><td></td></tr>
<tr><td><svg><use href="#fy"/></svg></td><td>Постеризан</td><td></td><td></td><td></td><td></td><td></td></tr>
<tr><td><svg><use href="#fc"/></svg></td><td>Постеризан мазь 25 г</td><td>2</td><td></td><td></td><td></td><td>8965</td></tr>
<tr><td><svg><use href="#fc"/></svg></td><td>Постеризан свечи №10</td><td></td><td></td><td></td><td></td><td>12144</td></tr>
<tr><td><svg><use href="#fc"/></svg></td><td>Постеризан супп №5</td><td>8</td><td></td><td></td><td></td><td></td></tr>
<tr><td><svg><use href="#fc"/></svg></td><td>Постеризан форте мазь 25 г</td><td>2</td><td></td><td></td><td></td><td>8964</td></tr>
<tr><td><svg><use href="#fc"/></svg></td><td>Постеризан форте свечи №10</td><td></td><td></td><td></td><td></td><td>10596</td></tr>
<tr><td><svg><use href="#fc"/></svg></td><td>Постеризан форте свечи №5</td><td>4</td><td></td><td></td><td></td><td></td></tr>
<tr><td><svg><use href="#fy"/></svg></td><td>Постинор</td><td></td><td></td><td></td><td></td><td></td></tr>
<tr><td><svg><use href="#fc"/></svg></td><td>Постинор таб 0,75 мг №2</td><td>2</td><td></td><td></td><td></td><td>44309</td></tr>
<tr><td><svg><use href="#fy"/></svg></td><td>Посуда для кормления</td><td></td><td></td><td></td><td></td><td></td></tr>
<tr><td><svg><use href="#fc"/></svg></td><td>Потентин-флора №30</td><td></td><td></td><td></td><td></td><td></td></tr>
<tr><td><svg><use href="#fy"/></svg></td><td>Потенциале</td><td></td><td></td><td></td><td></td><td></td></tr>
<tr class="tail"><td></td><td></td><td></td><td></td><td></td><td></td><td></td></tr>
</tbody>
</table>
<div class="vs"><i class="btn up"></i><i class="btn vth"></i><i class="btn dn"></i></div>
</div>
<i class="marker"></i>
</section>
</div>
<form class="props">
<div class="r r1"><i class="btn w63"></i><i class="btn w75"></i><i class="btn w42"></i><i class="btn w113"></i><i class="btn w147"></i><i class="btn w20"></i><span>Цена:</span></div>
<div class="r r2"><i class="btn w666"></i><i class="btn w81"></i></div>
<div class="r r3"><label>Активное в-во:</label><i class="fld f1"></i></div>
<div class="r r4"><label>Фарм группа:</label><i class="fld f2"></i><i class="fld f3">Пешко В.М.</i></div>
<div class="r r5"><label>Вид наценки:</label><i class="fld f4">Общая 1</i><b>Пр-ль:</b><i class="fld f5"></i><span>Ст. НДС:</span><i class="fld f6">ПДВ 7%</i></div>
<div class="r r6"><i class="btn p1">Артикли (F2)</i><i class="btn p2">Отсутствует (F6)</i><i class="btn p3">Аналоги (F7)</i><i class="btn p4">Индивид. заказ (Alt+F12)</i><i class="btn p5"><svg><use href="#bdark"/></svg>по подстроке (Alt+F10)</i><i class="btn p6">Отбор по ...</i><i class="btn p7">Остатки</i><i class="btn p8">Подчиненный</i></div>
</form>
</main>

<section class="msgs">
<div class="side"><i class="btn x">×</i><i class="btn pr"></i><i class="vgrip"></i></div>
<div class="msgbox">
<div class="lines">
<p><i></i>Номер выгрузки базы и номер последнего файла соответствуют!</p>
<p class="st"><i></i>****************************************************************************************************</p>
<p><i class="inf">i</i>Поступило сообщение из базы А/п&nbsp; пункт №1 апт. №5 :</p>
<p><i></i>Аптечный пункт №1 аптеки №5</p>
<p class="st"><i></i>****************************************************************************************************</p>
<p><i></i>Снимаем больше товара, чем заказано по товаруВиши Набор 8 марта Неовадиол 2016. Хотим снять: 1. Заказано: 0. Не получится!!!!</p>
<p><i></i>Снимаем больше товара, чем заказано по товаруДоппельгерц Актив Магний + Калий таб шип 6600 мг №15. Хотим снять: 1. Заказано: 0. Не получится!!!!</p>
<p><i class="err">!</i>Не заполнено поле Контрагент в строке 4!</p>
</div>
<div class="hs"><i class="btn lf"></i><i class="btn th2"></i><i class="btn rt"></i></div>
</div>
</section>

<div class="tabs"><div class="tab"><svg class="ic"><use href="#cal"/></svg><b>Товары (Выбор) (09.03.16) (Вс...</b></div></div>
<div class="status"><span class="hint">Для получения подсказки нажмите F1</span><i class="s1"></i><i class="s2">NUM</i><i class="s3">ТА: 31.03.16&nbsp; 00:00:00</i><i class="s4">БИ: 4 квартал 2015 г.</i><i class="s5">ТП:</i><i class="s6">ENU</i><i class="s7">10:03</i></div>
<footer class="taskbar">
<div class="task start"><svg class="ic"><use href="#win"/></svg><b>Пуск</b></div>
<div class="quick"><svg><use href="#onec"/></svg><svg><use href="#flop"/></svg><svg><use href="#ie"/></svg></div>
<div class="task"><svg class="ic"><use href="#onec"/></svg><span class="t1">Конфигуратор - АГП v....</span></div>
<div class="task on"><svg class="ic"><use href="#onec"/></svg><b>1С:Предприятие - АГ...</b></div>
<div class="task"><svg class="ic"><use href="#flop"/></svg><span>Total Commander 6.50Я...</span></div>
<div class="task"><svg class="ic"><use href="#app"/></svg><span>RequestServer</span></div>
<div class="task"><svg class="ic"><use href="#pc"/></svg><span>Диспетчер задач Wind...</span></div>
<span class="lang">EN</span><i class="sep"></i>
<div class="tray"><b>«</b><i class="cpu"></i><svg class="ic"><use href="#net"/></svg><i class="u"></i><span>10:03</span></div>
</footer>
</body>
</html>
```
FILE: styles.css
```css
* { box-sizing: border-box; margin: 0; padding: 0; }
i { font-style: normal; }
body { width: 1280px; height: 1024px; overflow: hidden; display: flex; flex-direction: column; background: #d5d2cc; color: #000; font: 11px/13px "DejaVu Sans Condensed", "DejaVu Sans", sans-serif; white-space: nowrap; }
.defs { position: absolute; }
svg { width: 16px; height: 16px; flex: none; shape-rendering: crispEdges; display: block; }

.titlebar { height: 18px; background: #0a246a; display: flex; align-items: center; padding-left: 2px; }
.title { color: #fff; font-weight: bold; font-size: 11px; margin-left: 2px; letter-spacing: 0.11px; }
.winbtns { margin-left: auto; display: flex; padding-right: 4px; }
.wb { width: 15px; height: 13px; background: #d5d2cc; border: 1px solid; border-color: #fff #404040 #404040 #fff; position: relative; margin-left: 1px; text-align: center; font: bold 14px/11px "DejaVu Sans", sans-serif; }
.wb + .wb { margin-left: 0; }
.wb.cl { margin-left: 2px; }
.mn::after { content: ""; position: absolute; left: 3px; bottom: 2px; width: 6px; height: 2px; background: #000; }
.rs::before, .rs::after { content: ""; position: absolute; width: 6px; height: 6px; border: 1px solid #000; border-top-width: 2px; background: #d5d2cc; }
.rs::before { left: 5px; top: 1px; }
.rs::after { left: 3px; top: 4px; height: 5px; }

.menubar { height: 21px; border-bottom: 1px solid #808080; display: flex; align-items: center; padding-left: 4px; }
.menu { display: grid; grid-template-columns: 39px 61px 62px 79px 70px 60px 51px 48px 38px 60px; margin-left: 5px; letter-spacing: -0.1px; }

.bar { display: flex; border-top: 1px solid #fff; }
.bar1 { height: 29px; }
.bar2 { height: 30px; }
.bar3 { height: 30px; padding: 6px 0 0 5px; }
.bar3 svg { margin: 0 4px 0 3px; }
.band { display: flex; align-items: center; border-right: 1px solid #808080; border-bottom: 1px solid #808080; border-left: 1px solid #fff; padding-left: 4px; }
.bar2 .band { padding-top: 1px; }
.band.first { border-left: 0; padding-left: 4px; }
.band svg { margin: 0 4px 0 3px; }
.grip { width: 6px; height: 25px; flex: none; border: solid #fff; border-width: 0 1px; background: linear-gradient(90deg, #808080 1px, #d5d2cc 1px 2px, #fff 2px 3px, #808080 3px); }
.sep { width: 2px; height: 22px; border-left: 1px solid #808080; border-right: 1px solid #fff; }
.band .sep { margin: 0 1px 0 5px; flex: none; }
.b1 { width: 545px; }
.b1 .grip { margin-right: 1px; }
.b2 { width: 196px; margin-left: 275px; }
.b2 b { width: 23px; text-align: center; font: bold 10.500px/13px "DejaVu Serif", serif; letter-spacing: -1px; }
.band .wide { margin-right: 5px; }
.combo { width: 149px; height: 21px; border: 1px solid; border-color: #808080 #fff #fff #808080; background: #fff; display: flex; outline: 1px solid #404040; outline-offset: -2px; padding: 2px; align-items: center; }
.combo span { flex: 1; background: #0a246a; color: #fff; height: 15px; line-height: 15px; margin-right: 2px; overflow: hidden; letter-spacing: -0.05px; }
.c1 { width: 70px; } .c2 { width: 134px; margin-left: 18px; } .c3 { width: 157px; margin-left: 35px; } .c4 { width: 203px; margin-left: 41px; } .c5 { width: 433px; }
.xls { width: 29px; padding-left: 5px; font-size: 11px; letter-spacing: -0.700px; }

.btn { display: flex; align-items: center; justify-content: center; background: #d5d2cc; border: 1px solid; border-color: #fff #404040 #404040 #fff; box-shadow: inset -1px -1px #808080; flex: none; }
.hs, .vs { display: flex; background: repeating-conic-gradient(#fff 0 25%, #d5d2cc 0 50%) 0 0 / 2px 2px; }
.hs .btn { height: 16px; width: 16px; }
.vs { flex-direction: column; width: 16px; }
.vs .btn { width: 16px; height: 16px; }
.btn.up::after, .btn.dn::after, .btn.lf::after, .btn.rt::after { content: ""; border: 4px solid transparent; }
.btn.up::after { border-bottom-color: #000; border-top: 0; }
.btn.dn::after { border-top-color: #000; border-bottom: 0; }
.btn.lf::after { border-right-color: #000; border-left: 0; }
.btn.rt::after { border-left-color: #000; border-right: 0; margin-left: 1px; }
.hs .btn.rt { margin-left: auto; }
.combo .btn { width: 16px; height: 17px; }

.work { height: 636px; border-top: 1px solid #808080; border-left: 2px solid #606060; font-family: "Liberation Sans", Arial, sans-serif; }
.panes { display: flex; height: 489px; padding-left: 4px; }
.tree { width: 139px; height: 483px; border-left: 2px solid #606060; background: #fff; display: flex; flex-direction: column; border-bottom: 1px solid #fff; overflow: hidden; }
.tree ul { list-style: none; height: 466px; }
.tree li { height: 16px; display: flex; align-items: center; padding-left: 23px; position: relative; font: 11px/15px "DejaVu Sans Condensed", sans-serif; }
.tree li.root { padding-left: 4px; }
.tree li + li::before { content: ""; position: absolute; left: 27px; top: 0; height: 16px; border-left: 1px dotted #808080; }
.tree li:last-child::before { height: 5px; }
.exp { width: 9px; height: 9px; flex: none; border: 1px solid #808080; position: relative; z-index: 1; background: linear-gradient(#000, #000) 1px 3px / 5px 1px no-repeat, linear-gradient(#000, #000) 3px 1px / 1px 5px no-repeat, #fff; }
.exp.m { background: linear-gradient(#000, #000) 1px 3px / 5px 1px no-repeat #fff; }
.exp.none { background: none; border-color: transparent; }
.dots { width: 6px; flex: none; border-top: 1px dotted #808080; }
.tree svg { margin: 0 3px 0 0; }
.tree li > span { padding: 0 2px; letter-spacing: -0.1px; height: 15px; }
.tree li:not(.root) > span { letter-spacing: -0.35px; }
.tree .cur { background: #d5d2cc; }
.hs .th { width: 63px; }

.gridbox { position: relative; margin: 4px 0 0 7px; width: 1123px; height: 483px; border: solid; border-width: 1px; border-color: #606060 #fff #fff #606060; }
.gridview { display: flex; height: 481px; overflow: hidden; border-top: 1px solid #404040; background: #fff; }
table { table-layout: fixed; width: 1105px; border-collapse: separate; border-spacing: 0; font-size: 11px; }
.k0 { width: 19px; } .k1 { width: 583px; } .k2 { width: 66px; } .k3 { width: 70px; } .k4 { width: 74px; } .k5 { width: 129px; } .k6 { width: 164px; }
th, td { height: 15px; line-height: 13px; border-bottom: 1px solid #000; overflow: hidden; padding: 0 0 0 4px; text-align: left; position: relative; }
th { height: 16px; background: #d5d2cc; border-bottom: 3px double #000; font: bold 11px/12px "DejaVu Sans", sans-serif; letter-spacing: -0.45px; }
th + th, td + td { border-left: 3px double #000; padding-left: 2px; }
td:first-child { background: #d5d2cc; padding: 0 0 0 2px; }
td svg { width: 16px; height: 14px; }
td:nth-child(6) { text-align: right; padding-right: 2px; }
.sel td { background: #ffd700; }
.sel td:first-child { background: #d5d2cc; }
.sel td:nth-child(2) { background: #0a246a; color: #fff; outline: 1px dotted #c0b070; outline-offset: -1px; }
.tail td { border-bottom: 0; }
.vth { margin-top: 312px; }
.vs .dn { margin-top: auto; }
.marker { position: absolute; left: 895px; top: 211px; width: 51px; height: 105px; border: 5px solid #ed1c24; border-radius: 11px; }

.props { height: 146px; border-bottom: 1px solid #fff; }
.r { display: flex; align-items: flex-start; }
.r label, .r > span, .r > b { line-height: 13px; flex: none; }
.r1 { padding: 3px 0 0 2px; height: 26px; }
.r1 .btn { height: 21px; }
.w63 { width: 64px; margin-right: 3px; } .w75 { width: 76px; margin-right: 4px; } .w42 { width: 43px; margin-right: 3px; } .w113 { width: 114px; margin-right: 2px; } .w147 { width: 148px; margin-right: 3px; } .w20 { width: 21px; margin-right: 6px; }
.r1 span { padding-top: 6px; }
.r2 { height: 24px; padding-left: 5px; }
.w666 { width: 666px; height: 22px; margin: 1px 7px 0 0; } .w81 { width: 82px; height: 21px; }
.r3 { height: 23px; padding-left: 8px; }
.r label { width: 78px; padding: 5px 0 0 1px; }
.fld { height: 20px; border: 1px solid; border-color: #808080 #fff #fff #808080; box-shadow: inset 1px 1px #404040, inset 0 0 0 2px #fff; line-height: 19px; padding-left: 2px; flex: none; }
.f1 { width: 676px; }
.r4 { height: 22px; padding-left: 8px; }
.f2 { width: 546px; margin-left: 1px; } .f3 { width: 126px; }
.r5 { height: 24px; padding-left: 8px; }
.f4 { width: 290px; margin-top: 1px; line-height: 20px; } .r5 b { width: 43px; padding: 5px 0 0 2px; font-size: 11px; } .f5 { width: 215px; } .r5 span { width: 50px; padding: 5px 0 0 1px; } .f6 { width: 78px; }
.r6 { padding-left: 3px; height: 22px; }
.r6 .btn { height: 20px; letter-spacing: -0.1px; }
.p1 { width: 71px; margin-right: 4px; } .p2 { width: 89px; margin-right: 4px; } .p3 { width: 71px; margin-right: 7px; } .p4 { width: 143px; margin-right: 6px; } .p5 { width: 137px; margin-right: 6px; } .p6 { width: 88px; margin: -2px 3px 0 0; } .p7 { width: 51px; } .p8 { width: 75px; }
.p5 svg { margin-right: 3px; }

.msgs { height: 183px; display: flex; border-top: 2px solid #808080; padding-top: 1px; font-family: "Liberation Sans", Arial, sans-serif; box-shadow: inset 0 2px #111; border-bottom: 1px solid #808080; }
.side { width: 19px; padding: 6px 0 0 4px; }
.side .btn { width: 12px; height: 11px; font: bold 12px/8px "DejaVu Sans", sans-serif; }
.side .pr { margin-top: 1px; }
.pr::after { content: ""; border: 3px solid transparent; border-left-color: #808080; border-right: 0; }
.vgrip { display: block; width: 6px; height: 142px; margin: 1px 0 0 3px; background: linear-gradient(90deg, #fff 1px, #d5d2cc 1px 2px, #808080 2px 3px, #fff 3px 4px, #d5d2cc 4px 5px, #808080 5px); }
.msgbox { margin: 3px 2px 4px 0; flex: 1; border: solid; border-width: 2px 1px 1px; border-color: #606060 #fff #fff #606060; display: flex; flex-direction: column; }
.lines { flex: 1; padding-top: 1px; background: linear-gradient(90deg, #c2c0c8 20px, #fff 20px); }
.lines p { height: 13px; line-height: 15px; display: flex; }
.lines i { width: 40px; flex: none; padding-left: 6px; font: bold 13px/14px "Liberation Mono", monospace; letter-spacing: 0; }
.lines i:empty { padding-left: 8px; }
.lines i:empty::before { content: ""; display: block; margin-top: 2px; width: 0; border: 4px solid transparent; border-left-color: #00009c; border-right: 0; }
.lines .inf { color: #008000; } .lines .err { color: red; }
.lines .st { letter-spacing: -0.28px; line-height: 14px; }
.hs .th2 { width: 271px; }

.tabs { height: 29px; border-top: 2px solid #fff; border-bottom: 1px solid #808080; padding: 3px 0 0 2px; }
.tab { width: 211px; height: 20px; border: 1px solid; border-color: #404040 #fff #fff #404040; display: flex; align-items: center; padding-left: 1px; }
.tab b { margin-left: 1px; letter-spacing: 0.05px; }
.status { height: 20px; display: flex; border-bottom: 1px solid #fff; border-top: 1px solid #fff; align-items: center; }
.status i { height: 16px; border: 1px solid; border-color: #808080 #fff #fff #808080; margin-right: 2px; line-height: 15px; padding-left: 1px; flex: none; }
.hint { width: 686px; flex: none; padding-left: 2px; letter-spacing: -0.2px; }
.s1 { width: 26px; } .s2 { width: 27px; } .s3 { width: 152px; } .s4 { width: 151px; } .s5 { width: 151px; } .s6 { width: 26px; } .s7 { width: 49px; }
.taskbar { flex: 1; display: flex; padding: 2px 2px 0; align-items: flex-start; }
.task { width: 160px; height: 22px; margin-right: 3px; border: 1px solid; border-color: #fff #404040 #404040 #fff; box-shadow: inset -1px -1px #808080; display: flex; align-items: center; padding-left: 3px; flex: none; }
.task span, .task b { margin-left: 3px; }
.task.on { border-color: #404040 #fff #fff #404040; box-shadow: inset 1px 1px #808080; background: repeating-conic-gradient(#fff 0 25%, #d5d2cc 0 50%) 0 0 / 2px 2px; padding-top: 2px; }
.task.on b { margin-left: 5px; letter-spacing: -0.1px; }
.start { width: 51px; margin: 0; padding-left: 2px; }
.start b { margin-left: 1px; font-size: 12px; letter-spacing: -0.4px; }
.quick { display: flex; gap: 7px; padding: 3px 0 0 8px; width: 87px; }
.lang { margin-left: 183px; margin-top: 3px; width: 16px; height: 16px; background: #0a246a; color: #fff; line-height: 16px; text-align: center; font-size: 10px; }
.taskbar > .sep { margin: 0 4px; height: 23px; flex: none; }
.tray { flex: 1; height: 23px; border: 1px solid; border-color: #808080 #fff #fff #808080; display: flex; align-items: center; padding-left: 4px; }
.tray b { font-size: 13px; width: 14px; }
.cpu { width: 12px; height: 13px; margin-right: 5px; border: solid #fff; border-width: 0 1px 1px 0; background: repeating-linear-gradient(90deg, #00000000 0 1px, #003000 1px 2px), repeating-linear-gradient(#10a010 0 1px, #003000 1px 2px); }
.u { width: 13px; height: 14px; margin: 0 8px 0 4px; border: 4px solid #00e000; border-top: 0; border-radius: 0 0 7px 7px; }
```
